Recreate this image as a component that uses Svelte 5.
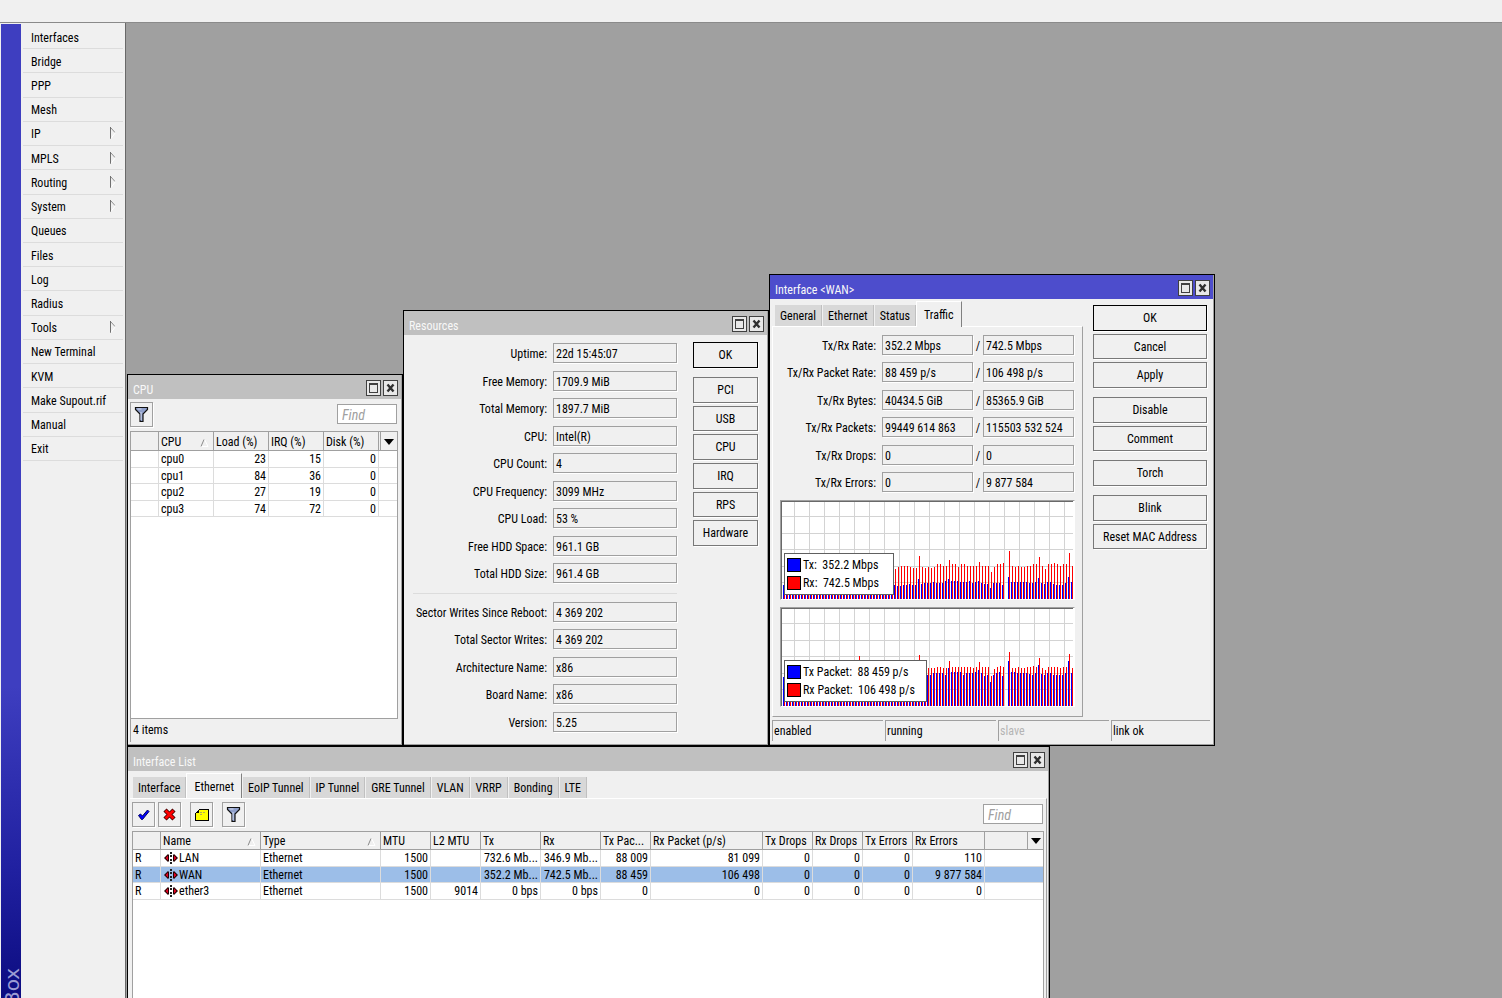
<script lang="ts">
	type Row = { flag: string; name: string; cells: string[] };

	const menu = [
		{ label: 'Interfaces' },
		{ label: 'Bridge' },
		{ label: 'PPP' },
		{ label: 'Mesh' },
		{ label: 'IP', sub: true },
		{ label: 'MPLS', sub: true },
		{ label: 'Routing', sub: true },
		{ label: 'System', sub: true },
		{ label: 'Queues' },
		{ label: 'Files' },
		{ label: 'Log' },
		{ label: 'Radius' },
		{ label: 'Tools', sub: true },
		{ label: 'New Terminal' },
		{ label: 'KVM' },
		{ label: 'Make Supout.rif' },
		{ label: 'Manual' },
		{ label: 'Exit' }
	];

	const cpus = [
		['cpu0', 23, 15, 0],
		['cpu1', 84, 36, 0],
		['cpu2', 27, 19, 0],
		['cpu3', 74, 72, 0]
	];

	const resources = [
		['Uptime', '22d 15:45:07'],
		['Free Memory', '1709.9 MiB'],
		['Total Memory', '1897.7 MiB'],
		['CPU', 'Intel(R)'],
		['CPU Count', '4'],
		['CPU Frequency', '3099 MHz'],
		['CPU Load', '53 %'],
		['Free HDD Space', '961.1 GB'],
		['Total HDD Size', '961.4 GB']
	];

	const storage = [
		['Sector Writes Since Reboot', '4 369 202'],
		['Total Sector Writes', '4 369 202'],
		['Architecture Name', 'x86'],
		['Board Name', 'x86'],
		['Version', '5.25']
	];

	const traffic = [
		['Tx/Rx Rate', '352.2 Mbps', '742.5 Mbps'],
		['Tx/Rx Packet Rate', '88 459 p/s', '106 498 p/s'],
		['Tx/Rx Bytes', '40434.5 GiB', '85365.9 GiB'],
		['Tx/Rx Packets', '99449 614 863', '115503 532 524'],
		['Tx/Rx Drops', '0', '0'],
		['Tx/Rx Errors', '0', '9 877 584']
	];

	const wanTabs = ['General', 'Ethernet', 'Status', 'Traffic'];
	const listTabs = ['Interface', 'Ethernet', 'EoIP Tunnel', 'IP Tunnel', 'GRE Tunnel', 'VLAN', 'VRRP', 'Bonding', 'LTE'];
	const wanActions = [['OK', 'Cancel', 'Apply'], ['Disable', 'Comment'], ['Torch'], ['Blink', 'Reset MAC Address']];

	const columns = [
		{ label: '', width: 28 },
		{ label: 'Name', width: 100, sort: true },
		{ label: 'Type', width: 120, sort: true },
		{ label: 'MTU', width: 50 },
		{ label: 'L2 MTU', width: 50 },
		{ label: 'Tx', width: 60 },
		{ label: 'Rx', width: 60 },
		{ label: 'Tx Pac...', width: 50 },
		{ label: 'Rx Packet (p/s)', width: 112 },
		{ label: 'Tx Drops', width: 50 },
		{ label: 'Rx Drops', width: 50 },
		{ label: 'Tx Errors', width: 50 },
		{ label: 'Rx Errors', width: 72 }
	];

	const interfaces: Row[] = [
		{ flag: 'R', name: 'LAN', cells: ['1500', '', '732.6 Mb...', '346.9 Mb...', '88 009', '81 099', '0', '0', '0', '110'] },
		{ flag: 'R', name: 'WAN', cells: ['1500', '', '352.2 Mb...', '742.5 Mb...', '88 459', '106 498', '0', '0', '0', '9 877 584'] },
		{ flag: 'R', name: 'ether3', cells: ['1500', '9014', '0 bps', '0 bps', '0', '0', '0', '0', '0', '0'] }
	];

	let wanTab = 'Traffic';
	let listTab = 'Ethernet';
	let selected = 'WAN';

	// one sample per 3px: tx line, rx line, gap
	const rateRx = [
		...Array(37).fill(32),
		30, 32, 33, 33, 33, 32, 31, 31, 43, 32, 31, 32, 31, 32, 35, 35, 33, 33, 39, 35, 35, 32, 35, 35, 33, 33, 33, 33, 37, 33,
		33, 33, 27, 32, 35, 35, 36, 0, 48, 33, 32, 33, 32, 32, 33, 33, 35, 35, 42, 33, 30, 35, 35, 36, 35, 33, 35, 35, 46, 33
	];
	const rateTx = [
		...Array(37).fill(14),
		14, 13, 13, 14, 14, 15, 14, 14, 20, 15, 16, 16, 16, 17, 16, 16, 16, 18, 20, 18, 18, 18, 17, 17, 17, 18, 16, 17, 18, 16,
		15, 15, 11, 16, 16, 16, 14, 0, 22, 17, 17, 17, 17, 17, 17, 16, 16, 17, 21, 16, 15, 17, 17, 15, 14, 14, 14, 16, 22, 17
	];
	const packetRx = [
		...Array(25).fill(36), 50, ...Array(19).fill(36), 51, 38, 37,
		38, 38, 38, 39, 39, 38, 38, 45, 39, 39, 39, 39, 39, 39, 39, 38, 39, 44, 39,
		39, 39, 30, 37, 39, 40, 39, 0, 54, 38, 38, 39, 38, 38, 39, 39, 40, 39, 48, 38, 36, 39, 39, 39, 39, 38, 39, 39, 52, 38
	];
	const packetTx = [
		...Array(25).fill(29), 36, ...Array(19).fill(29), 36, 31, 31,
		31, 31, 33, 33, 33, 33, 31, 38, 34, 34, 34, 34, 31, 33, 33, 33, 34, 36, 33,
		30, 31, 24, 31, 33, 34, 30, 0, 45, 34, 34, 33, 33, 33, 33, 32, 31, 33, 41, 32, 31, 33, 33, 31, 31, 31, 31, 33, 45, 33
	];

	const plotHeight = 97;

	function bars(values: number[], offset: number) {
		return values.map((v, i) => (v ? `M${i * 3 + offset} ${plotHeight - v}h1v${v}h-1z` : '')).join('');
	}

	function grid() {
		let d = '';
		for (let x = 12; x < 291; x += 15) d += `M${x} 0h1v${plotHeight}h-1z`;
		for (const y of [14, 31, 47, 64, 80]) d += `M0 ${y}h291v1h-291z`;
		return d;
	}

	const charts = [
		{ rx: rateRx, tx: rateTx, legend: ['Tx:  352.2 Mbps', 'Rx:  742.5 Mbps'], wide: false },
		{ rx: packetRx, tx: packetTx, legend: ['Tx Packet:  88 459 p/s', 'Rx Packet:  106 498 p/s'], wide: true }
	];
</script>

{#snippet titlebar(title)}
	<header class="titlebar">
		<h2>{title}</h2>
		<button class="win-btn" aria-label="Maximize">
			<svg width="11" height="12" viewBox="0 0 11 12" shape-rendering="crispEdges">
				<path d="M1 1h9v10h-9z M2 3v7h7v-7z" fill="#404040" fill-rule="evenodd" />
			</svg>
		</button>
		<button class="win-btn" aria-label="Close">
			<svg width="11" height="12" viewBox="0 0 11 12">
				<path d="M2.5 2.5l6 7M8.5 2.5l-6 7" stroke="#303030" stroke-width="2.4" />
			</svg>
		</button>
	</header>
{/snippet}

{#snippet funnel()}
	<svg width="15" height="17" viewBox="0 0 15 17">
		<path d="M1.5 1.5h12v2l-4.5 4.5v7.5h-3v-7.5l-4.5-4.5z" fill="#8f9fca" stroke="#111" stroke-width="1.2" />
		<path d="M3.5 3h4M7 6v8" stroke="#d3dbf0" />
	</svg>
{/snippet}

{#snippet sortMark()}
	<svg class="sort" width="9" height="8" viewBox="0 0 9 8">
		<path d="M.5 7.5h7.5l-3.5-7" fill="none" stroke="#fff" />
		<path d="M1 7.5l3-7" fill="none" stroke="#8a8a8a" />
	</svg>
{/snippet}

{#snippet dropMark()}
	<svg width="10" height="6" viewBox="0 0 10 6"><path d="M0 0h10l-5 6z" /></svg>
{/snippet}

{#snippet fields(rows, prefix)}
	{#each rows as [label, value], i}
		<label for="{prefix}{i}">{label}:</label>
		<input id="{prefix}{i}" type="text" readonly {value} />
	{/each}
{/snippet}

<div class="app">
	<div class="topbar"></div>

	<div class="body">
		<div class="brand"><span>Box</span></div>

		<nav class="menu">
			{#each menu as item}
				<button>
					{item.label}
					{#if item.sub}
						<svg width="6" height="12" viewBox="0 0 6 12">
							<path d="M.5 12v-12" stroke="#707070" />
							<path d="M1 1l4 4.5" stroke="#909090" />
							<path d="M5.5 5.5l-4.5 6" stroke="#fff" />
						</svg>
					{/if}
				</button>
			{/each}
		</nav>

		<main class="desktop">
			<section class="window cpu">
				{@render titlebar('CPU')}
				<div class="toolbar">
					<button class="tool" aria-label="Filter">{@render funnel()}</button>
					<input class="find" type="text" placeholder="Find" aria-label="Find" />
				</div>
				<div class="grid-box">
					<table class="cpu-table">
						<thead>
							<tr>
								<th class="w28"></th>
								<th class="w55">CPU {@render sortMark()}</th>
								<th class="w55">Load (%)</th>
								<th class="w55">IRQ (%)</th>
								<th class="w55">Disk (%)</th>
								<th class="w2"></th>
								<th class="drop">{@render dropMark()}</th>
							</tr>
						</thead>
						<tbody>
							{#each cpus as [name, load, irq, disk]}
								<tr>
									<td></td>
									<td>{name}</td>
									<td class="num">{load}</td>
									<td class="num">{irq}</td>
									<td class="num">{disk}</td>
									<td colspan="2"></td>
								</tr>
							{/each}
						</tbody>
					</table>
				</div>
				<footer class="count">4 items</footer>
			</section>

			<section class="window resources">
				{@render titlebar('Resources')}
				<div class="split">
					<div class="facts">
						<div class="form">{@render fields(resources, 'res')}</div>
						<hr />
						<div class="form second">{@render fields(storage, 'sto')}</div>
					</div>
					<div class="actions">
						<div class="group"><button class="push default">OK</button></div>
						<div class="group">
							{#each ['PCI', 'USB', 'CPU', 'IRQ', 'RPS', 'Hardware'] as action}
								<button class="push">{action}</button>
							{/each}
						</div>
					</div>
				</div>
			</section>

			<section class="window wan active">
				{@render titlebar('Interface <WAN>')}
				<div class="split">
					<div class="tabbed">
						<div class="tabs" role="tablist">
							{#each wanTabs as tab}
								<button role="tab" class:current={wanTab === tab} aria-selected={wanTab === tab} on:click={() => (wanTab = tab)}>{tab}</button>
							{/each}
						</div>
						<div class="panel">
							<div class="pairs">
								{#each traffic as [label, tx, rx], i}
									<label for="tx{i}">{label}:</label>
									<input id="tx{i}" type="text" readonly value={tx} />
									<span>/</span>
									<input type="text" readonly value={rx} aria-label="{label} (Rx)" />
								{/each}
							</div>
							{#each charts as chart}
								<div class="chart">
									<svg width="291" height={plotHeight} viewBox="0 0 291 {plotHeight}" shape-rendering="crispEdges">
										<path d={grid()} fill="#d3d3d3" />
										<path d={bars(chart.tx, 1)} fill="#0000ff" />
										<path d={bars(chart.rx, 2)} fill="#ff0000" />
									</svg>
									<div class="legend" class:wide={chart.wide}>
										<span class="swatch tx"></span><span>{chart.legend[0]}</span>
										<span class="swatch rx"></span><span>{chart.legend[1]}</span>
									</div>
								</div>
							{/each}
						</div>
					</div>
					<div class="actions">
						{#each wanActions as group}
							<div class="group">
								{#each group as action}
									<button class="push" class:default={action === 'OK'}>{action}</button>
								{/each}
							</div>
						{/each}
					</div>
				</div>
				<footer class="status">
					<span>enabled</span>
					<span>running</span>
					<span class="off">slave</span>
					<span>link ok</span>
				</footer>
			</section>

			<section class="window list">
				{@render titlebar('Interface List')}
				<div class="tabs" role="tablist">
					{#each listTabs as tab}
						<button role="tab" class:current={listTab === tab} aria-selected={listTab === tab} on:click={() => (listTab = tab)}>{tab}</button>
					{/each}
				</div>
				<div class="panel">
					<div class="toolbar">
						<button class="tool" aria-label="Enable">
							<svg width="13" height="12" viewBox="0 0 13 12">
								<path d="M1.5 6.5l2-1.5 2 2 5-6 1.5 1.5-6.5 8h-1z" fill="#0000ff" stroke="#000060" />
							</svg>
						</button>
						<button class="tool" aria-label="Disable">
							<svg width="13" height="13" viewBox="0 0 13 13">
								<path d="M2 2l9 9M11 2l-9 9" stroke="#400000" stroke-width="4.5" />
								<path d="M2.5 2.5l8 8M10.5 2.5l-8 8" stroke="#ff0000" stroke-width="2.8" />
							</svg>
						</button>
						<button class="tool apart" aria-label="Comment">
							<svg width="14" height="12" viewBox="0 0 14 12" shape-rendering="crispEdges">
								<path d="M4 1h9v10h-12v-7z" fill="#ffff00" />
								<path d="M4 0h10v12h-14v-8h1v7h12v-10h-9z M1 3h1v-1h1v-1h1v3h-3z" />
								<path d="M5 3h2M8 3h2M5 5h2" stroke="#b0a860" />
							</svg>
						</button>
						<button class="tool apart" aria-label="Filter">{@render funnel()}</button>
						<input class="find" type="text" placeholder="Find" aria-label="Find" />
					</div>
					<div class="grid-box">
						<table>
							<colgroup>
								{#each columns as col}
									<col style="width: {col.width}px" />
								{/each}
								<col />
								<col style="width: 15px" />
							</colgroup>
							<thead>
								<tr>
									{#each columns as col}
										<th>{col.label}{#if col.sort}{@render sortMark()}{/if}</th>
									{/each}
									<th></th>
									<th class="drop">{@render dropMark()}</th>
								</tr>
							</thead>
							<tbody>
								{#each interfaces as row}
									<tr class:selected={row.name === selected} on:click={() => (selected = row.name)}>
										<td>{row.flag}</td>
										<td>
											<svg class="nic" width="14" height="12" viewBox="0 0 14 12">
												<path d="M0 6l4-4 1 1v6l-1 1zM14 6l-4-4-1 1v6l1 1z" fill="#200000" />
												<path d="M1.5 6l2.500-2.500v5zM12.500 6l-2.500-2.500v5z" fill="#e00020" />
												<path d="M7 0v2M7 3v2M7 7v2M7 10v2" stroke="#202020" stroke-width="2" />
											</svg>{row.name}
										</td>
										<td>Ethernet</td>
										{#each row.cells as cell}
											<td class="num">{cell}</td>
										{/each}
										<td colspan="2"></td>
									</tr>
								{/each}
							</tbody>
						</table>
					</div>
				</div>
			</section>
		</main>
	</div>
</div>

<style>
	:global(body) {
		background: #f0f0f0;
	}

	.app {
		display: flex;
		flex-direction: column;
		height: 100vh;
		overflow: hidden;
		color: #000;
		font-family: 'Roboto Condensed', 'Liberation Sans', Arial, sans-serif;
		font-size: 12px;
		line-height: 16px;
	}

	button,
	input {
		box-sizing: border-box;
		margin: 0;
		padding: 0;
		border: 0;
		border-radius: 0;
		background: #f0f0f0;
		color: inherit;
		font: inherit;
	}

	.topbar {
		flex: none;
		height: 22px;
		background: #f0f0f0;
		border-bottom: 1px solid #8a8a8a;
	}

	.body {
		display: flex;
		flex: 1;
		min-height: 0;
	}

	.brand {
		display: flex;
		flex: none;
		align-items: flex-end;
		width: 20px;
		margin: 1px 0 0 1px;
		overflow: hidden;
		background: linear-gradient(#3e3ec0 68%, #2020a0 87%, #0c0c80);
	}

	.brand span {
		height: 38px;
		margin-bottom: -8px;
		color: #9c9cd4;
		font-family: 'DejaVu Sans', sans-serif;
		font-size: 20px;
		line-height: 22px;
		text-align: right;
		writing-mode: vertical-rl;
		transform: rotate(180deg);
	}

	.menu {
		display: grid;
		flex: none;
		grid-auto-rows: 1fr;
		box-sizing: border-box;
		width: 104px;
		height: 438px;
		padding: 2px 2px 0;
	}

	.menu button {
		display: flex;
		align-items: center;
		justify-content: space-between;
		padding: 2px 7px 0 8px;
		border-bottom: 1px solid #dcdcdc;
		text-align: left;
		white-space: nowrap;
	}

	.menu svg {
		margin-bottom: 2px;
	}

	.desktop {
		position: relative;
		flex: 1;
		overflow: hidden;
		background: #a0a0a0;
		border-left: 1px solid #696969;
	}

	.window {
		position: absolute;
		display: flex;
		flex-direction: column;
		box-sizing: border-box;
		border: 1px solid #000;
		background: #f0f0f0;
		box-shadow: inset -1px -1px #a0a0a0;
	}

	.cpu {
		left: 1px;
		top: 351px;
		width: 276px;
		height: 372px;
	}

	.resources {
		left: 277px;
		top: 287px;
		width: 366px;
		height: 436px;
	}

	.wan {
		left: 643px;
		top: 251px;
		width: 446px;
		height: 472px;
	}

	.list {
		left: 1px;
		top: 723px;
		width: 923px;
		height: 472px;
	}

	.titlebar {
		display: flex;
		flex: none;
		align-items: center;
		gap: 2px;
		box-sizing: border-box;
		height: 24px;
		margin: 0 1px 0 0;
		padding: 2px 3px 0 5px;
		background: #c0c0c0;
		color: #f8f8f8;
	}

	.active .titlebar {
		background: #4d4dcc;
	}

	.titlebar h2 {
		flex: 1;
		margin: 0;
		padding-top: 3px;
		font-size: 12px;
		font-weight: normal;
	}

	.win-btn {
		display: grid;
		place-items: center;
		width: 15px;
		height: 16px;
		border: 1px solid #404040;
		background: #e8e8e8;
	}

	.toolbar {
		display: flex;
		flex: none;
		gap: 3px;
		padding: 3px 5px 4px 2px;
	}

	.tool {
		display: grid;
		place-items: center;
		width: 23px;
		height: 25px;
		border: 1px solid #a0a0a0;
		box-shadow: 1px 1px #fff;
	}

	.tool.apart {
		margin-left: 6px;
	}

	.find {
		width: 60px;
		height: 20px;
		margin: 2px 0 0 auto;
		padding: 2px 4px 0;
		border: 1px solid #a0a0a0;
		background: #fff;
		font-size: 14px;
		font-style: italic;
	}

	.find::placeholder {
		color: #a0a0a0;
		opacity: 1;
	}

	.grid-box {
		flex: 1;
		margin: 0 4px 0 2px;
		border: 1px solid #a0a0a0;
		background: #fff;
	}

	table {
		width: 100%;
		table-layout: fixed;
		border-collapse: separate;
		border-spacing: 0;
	}

	th,
	td {
		box-sizing: border-box;
		overflow: hidden;
		height: 17px;
		padding: 0 2px;
		border-right: 1px solid #dcdcdc;
		border-bottom: 1px solid #dcdcdc;
		font-weight: normal;
		line-height: 15px;
		text-align: left;
		white-space: nowrap;
	}

	th {
		height: 18px;
		padding-top: 2px;
		border-color: #a0a0a0;
		background: #f0f0f0;
	}

	.cpu-table th {
		height: 19px;
	}

	tbody tr:nth-child(even) td {
		height: 16px;
		line-height: 14px;
	}

	th:last-child,
	td:last-child {
		border-right: 0;
	}

	.w28 {
		width: 28px;
	}

	.w55 {
		width: 55px;
	}

	.w2 {
		width: 2px;
		padding: 0;
	}

	.drop {
		padding: 0;
		text-align: center;
	}

	.sort {
		float: right;
		margin: 4px 2px 0 0;
	}

	.num {
		text-align: right;
	}

	.selected td {
		background: #9cbee8;
	}

	.nic {
		margin: 0 1px;
		vertical-align: -2px;
	}

	.count {
		margin: 0 4px 3px 2px;
		padding: 3px 2px 4px;
		border-left: 1px solid #a0a0a0;
	}

	.split {
		display: flex;
		flex: 1;
		min-height: 0;
	}

	.facts {
		width: 273px;
		padding-top: 8px;
	}

	.form {
		display: grid;
		grid-template-columns: 1fr 124px;
		grid-auto-rows: 28px 27px;
		align-items: start;
		column-gap: 6px;
	}

	.form.second {
		grid-auto-rows: 27px 28px;
	}

	label {
		padding-top: 3px;
		text-align: right;
		white-space: nowrap;
	}

	.form input,
	.pairs input {
		width: 100%;
		height: 20px;
		padding: 1px 2px 0;
		border: 1px solid #a0a0a0;
		box-shadow: 1px 1px #fff;
	}

	hr {
		height: 1px;
		margin: 2px 0 8px 9px;
		border: 0;
		background: #dcdcdc;
	}

	.actions {
		display: flex;
		flex-direction: column;
		gap: 9px;
		flex: 1;
		padding: 6px 7px 0 16px;
	}

	.resources .actions {
		padding: 7px 10px 0 16px;
	}

	.wan .actions {
		padding-left: 10px;
	}

	.group {
		display: grid;
		grid-auto-rows: 26px 25px 26px;
		row-gap: 3px;
	}

	.push {
		border: 1px solid #787878;
		box-shadow: 1px 1px #fff;
		text-align: center;
		white-space: nowrap;
	}

	.push.default {
		border-color: #000;
	}

	.tabs {
		display: flex;
		flex: none;
		align-items: flex-end;
		gap: 1px;
		height: 27px;
		padding-left: 5px;
	}

	.tabs button {
		height: 21px;
		padding: 0 5px;
		border-right: 1px solid #c0c0c0;
		background: #d8d8d8;
		white-space: nowrap;
	}

	.tabs .current {
		height: 26px;
		margin: 0 0 -1px -1px;
		padding: 0 7px;
		border-top: 1px solid #fff;
		border-left: 1px solid #fff;
		border-right-color: #808080;
		background: #f0f0f0;
	}

	.panel {
		border-top: 1px solid #fff;
	}

	.tabbed {
		width: 313px;
	}

	.tabbed .panel {
		height: 389px;
		margin-left: 2px;
		border: 1px solid #fff;
		border-right-color: #a0a0a0;
		border-bottom-color: #a0a0a0;
	}

	.list .panel {
		display: flex;
		flex: 1;
		flex-direction: column;
		margin: 0 2px;
		border-right: 1px solid #a0a0a0;
	}

	.list .toolbar {
		padding-right: 3px;
	}

	.list .grid-box {
		margin-right: 2px;
	}

	.pairs {
		display: grid;
		grid-template-columns: 1fr 91px 10px 91px;
		grid-auto-rows: 27px 28px;
		align-items: start;
		padding: 8px 8px 0 0;
	}

	.pairs label {
		padding-right: 6px;
	}

	.pairs span {
		padding-top: 3px;
		text-align: center;
	}

	.chart {
		position: relative;
		margin: 0 7px 7px;
		border: 1px solid #a0a0a0;
		border-right-color: #fff;
		border-bottom-color: #fff;
		background: #fff;
	}

	.chart svg {
		display: block;
		border-top: 1px solid #696969;
		border-left: 1px solid #696969;
	}

	.legend {
		position: absolute;
		left: 3px;
		bottom: 4px;
		display: grid;
		grid-template-columns: 14px 1fr;
		grid-auto-rows: 18px;
		align-items: center;
		column-gap: 2px;
		box-sizing: border-box;
		width: 110px;
		padding: 2px;
		border: 1px solid #606060;
		background: #fff;
		white-space: pre;
	}

	.legend.wide {
		width: 143px;
	}

	.swatch {
		box-sizing: border-box;
		height: 14px;
		border: 1px solid #000;
	}

	.swatch.tx {
		background: #0000ff;
	}

	.swatch.rx {
		background: #ff0000;
	}

	.status {
		display: grid;
		grid-template-columns: 111px 111px 111px 1fr;
		gap: 2px;
		margin: 0 4px 4px 2px;
	}

	.status span {
		padding: 2px 1px;
		border-top: 1px solid #a0a0a0;
		border-left: 1px solid #a0a0a0;
	}

	.status .off {
		color: #b4b4b4;
	}
</style>
